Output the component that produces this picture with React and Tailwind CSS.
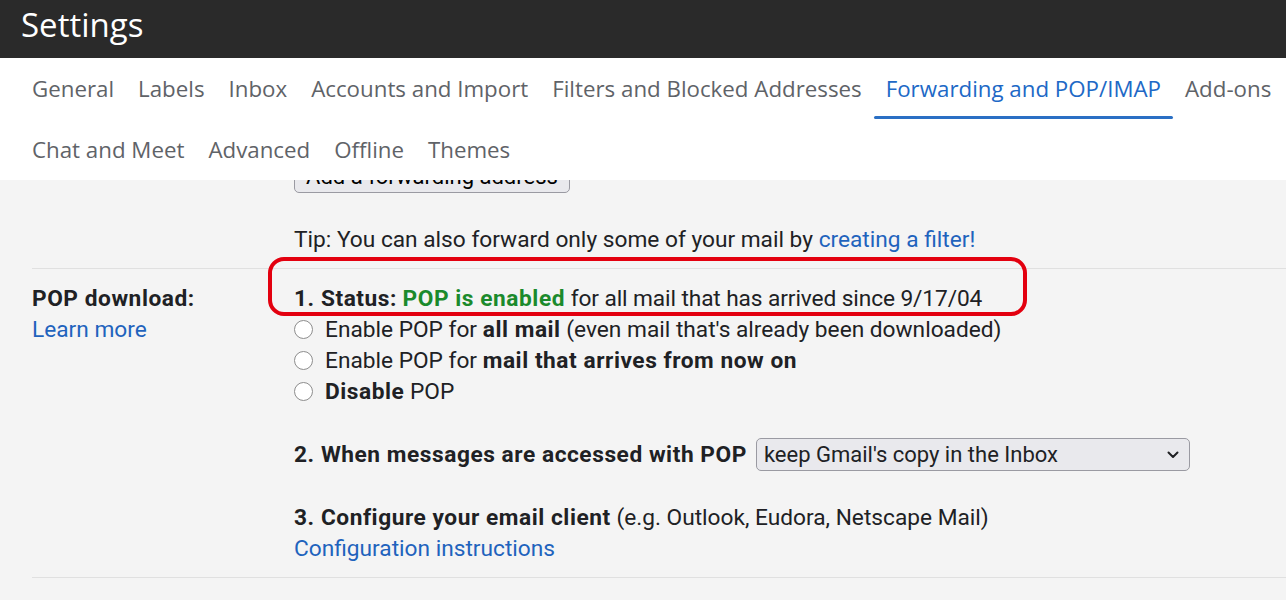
import React from "react";

const tabsRow1 = [
  "General",
  "Labels",
  "Inbox",
  "Accounts and Import",
  "Filters and Blocked Addresses",
  "Forwarding and POP/IMAP",
  "Add-ons",
];
const tabsRow2 = ["Chat and Meet", "Advanced", "Offline", "Themes"];

function Tab({ label, active }) {
  return (
    <div className="relative h-[61px] px-[12px] flex items-center whitespace-nowrap">
      <span className={active ? "text-[#2068c6]" : "text-[#5f6368]"}>{label}</span>
      {active && (
        <span className="absolute left-0 right-0 bottom-[0px] h-[3px] bg-[#2a6fc4] rounded-sm" />
      )}
    </div>
  );
}

function Radio({ children }) {
  return (
    <div className="flex items-center h-[31px]">
      <span className="w-[19px] h-[19px] rounded-full border border-[#8d8d8d] bg-white mr-[12px] shrink-0" />
      <span>{children}</span>
    </div>
  );
}

function B({ children, className = "" }) {
  return <span className={"font-bold tracking-[0.55px] " + className}>{children}</span>;
}

export default function App() {
  return (
    <div className="w-[1286px] h-[600px] overflow-hidden bg-[#f4f4f4] relative" style={{ fontFamily: "Roboto, 'Liberation Sans', sans-serif" }}>
      {/* Header */}
      <div className="h-[58px] bg-[#2a2a2a] flex items-center pl-[21px]">
        <span className="text-white text-[33px] leading-none pb-[10px]" style={{ fontFamily: "'Open Sans', Roboto, sans-serif" }}>
          Settings
        </span>
      </div>

      {/* Tabs */}
      <div className="bg-white h-[122px] pl-[20px] text-[22.3px]" style={{ fontFamily: "'Open Sans', Roboto, sans-serif" }}>
        <div className="flex">
          {tabsRow1.map((t) => (
            <Tab key={t} label={t} active={t === "Forwarding and POP/IMAP"} />
          ))}
        </div>
        <div className="flex">
          {tabsRow2.map((t) => (
            <Tab key={t} label={t} />
          ))}
        </div>
      </div>

      {/* Content */}
      <div className="h-[420px] overflow-hidden text-[22.7px] leading-[31px] text-[#202124]">
        {/* Forwarding section (scrolled) */}
        <div className="flex pl-[32px]">
          <div className="w-[262px] shrink-0" />
          <div className="pb-[13px]">
            <div className="-mt-[20px] h-[33px] w-[276px] rounded-[5px] border border-[#9a9aa2] bg-[#e9e9ed] text-black text-[22px] leading-[31px] text-center whitespace-nowrap overflow-hidden">
              Add a forwarding address
            </div>
            <p className="mt-[31px] whitespace-nowrap">
              Tip: You can also forward only some of your mail by{" "}
              <span className="text-[#1f63bd]">creating a filter!</span>
            </p>
          </div>
        </div>

        {/* POP download */}
        <div className="ml-[32px] border-t border-[#e0e0e0] flex pt-[14px] pb-[13px] whitespace-nowrap">
          <div className="w-[262px] shrink-0">
            <div><B>POP download:</B></div>
            <div className="text-[#1f63bd]">Learn more</div>
          </div>
          <div>
            <div>
              <B>1. Status:</B>{" "}
              <B className="text-[#1b8a2c]">POP is enabled</B>{" "}
              <span className="tracking-[-0.1px]">for all mail that has arrived since 9/17/04</span>
            </div>
            <Radio>
              Enable POP for <B>all mail</B> (even mail that's already been downloaded)
            </Radio>
            <Radio>
              Enable POP for <B>mail that arrives from now on</B>
            </Radio>
            <Radio>
              <B>Disable</B> POP
            </Radio>

            <div className="mt-[31px] flex items-center h-[33px]">
              <B>2. When messages are accessed with POP</B>
              <div className="ml-[9px] h-[33px] w-[434px] rounded-[5px] border border-[#9a9aa2] bg-[#e9e9ed] flex items-center justify-between pl-[7px] pr-[10px] text-[22px]">
                <span>keep Gmail's copy in the Inbox</span>
                <svg width="12" height="8" viewBox="0 0 12 8" fill="none">
                  <path d="M1.5 1.5 L6 6 L10.5 1.5" stroke="#202124" strokeWidth="2" strokeLinecap="round" strokeLinejoin="round" />
                </svg>
              </div>
            </div>

            <div className="mt-[31px]">
              <B>3. Configure your email client</B> (e.g. Outlook, Eudora, Netscape Mail)
            </div>
            <div className="text-[#1f63bd]">Configuration instructions</div>
          </div>
        </div>
        <div className="ml-[32px] border-t border-[#e0e0e0]" />
      </div>

      {/* Red annotation box */}
      <div className="absolute left-[268px] top-[257px] w-[759px] h-[59px] border-[4px] border-[#e3000f] rounded-[16px] pointer-events-none" />
    </div>
  );
}
